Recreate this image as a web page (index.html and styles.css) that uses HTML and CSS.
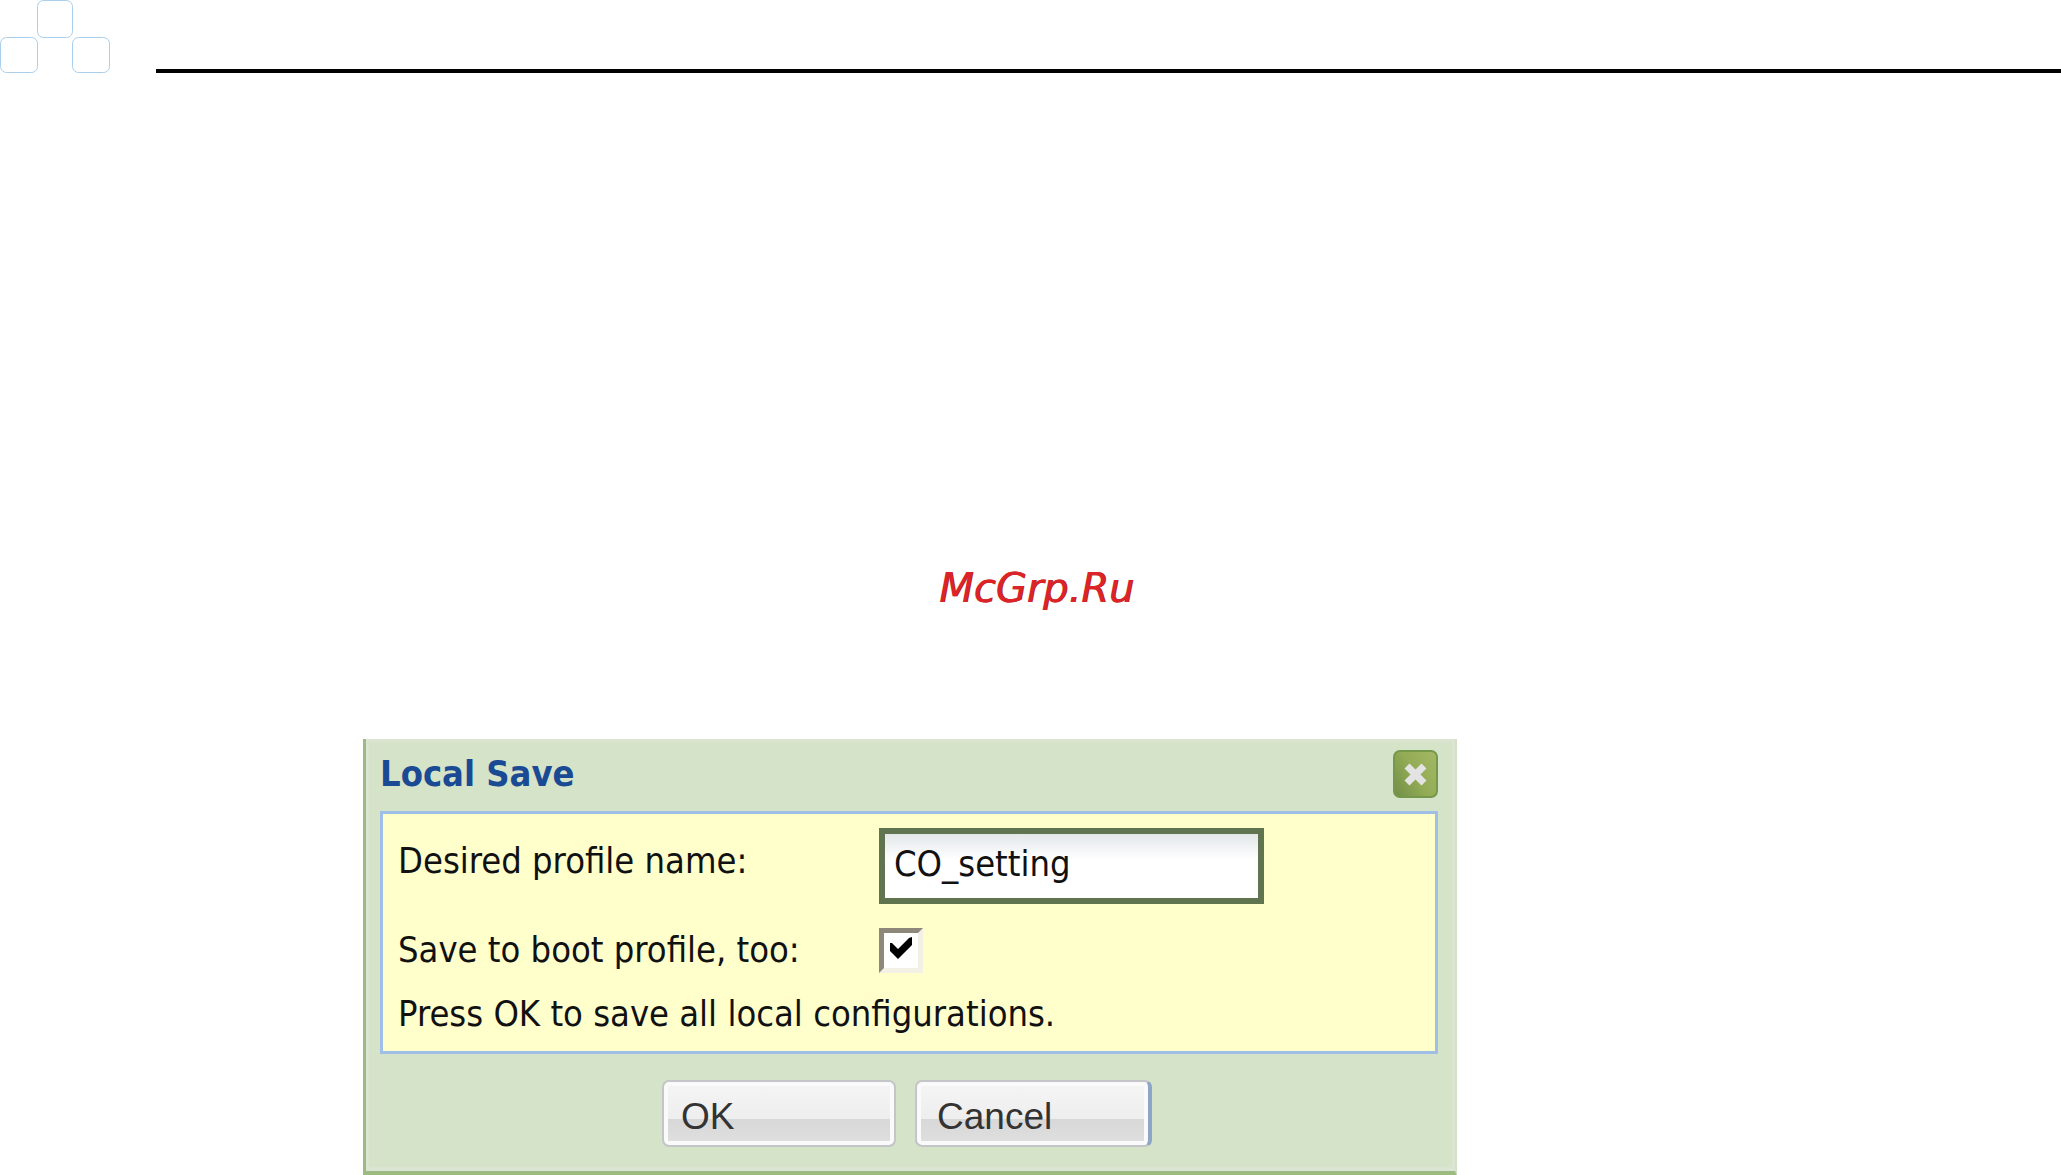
FILE: index.html
```html
<!DOCTYPE html>
<html lang="en">
<head>
    <meta charset="UTF-8">
    <meta name="viewport" content="width=device-width, initial-scale=1.0">
    <title>Local Save</title>

    <link rel="stylesheet" href="styles.css">
</head>
<body>
    <header class="topo">
        <svg class="logo" width="110" height="74" viewBox="0 0 110 74" aria-hidden="true">
            <rect x="37.5" y="0.5" width="35" height="37" rx="6"/>
            <rect x="0.5" y="37.5" width="37" height="35" rx="6"/>
            <rect x="72.5" y="37.5" width="37" height="35" rx="6"/>
        </svg>
        <div class="line"></div>
    </header>

    <p class="watermark">McGrp.Ru</p>

    <main class="page">
        <form class="dialog" onsubmit="return false">
            <div class="dialog-title">
                <h1>Local Save</h1>
                <button type="button" class="close" aria-label="Close">
                    <svg width="25" height="25" viewBox="0 0 25 25" aria-hidden="true">
                        <path d="M4 4L21 21M21 4L4 21"/>
                    </svg>
                </button>
            </div>

            <div class="dialog-body">
                <div class="row row-name">
                    <label for="profile">Desired profile name:</label>
                    <input type="text" id="profile" value="CO_setting">
                </div>
                <div class="row row-boot">
                    <label for="boot">Save to boot profile, too:</label>
                    <span class="check">
                        <input type="checkbox" id="boot" checked>
                        <svg width="22" height="22" viewBox="0 0 22 22" aria-hidden="true">
                            <path d="M0 6L2 6L8 12L19 1L22 0V8L8 22L0 14Z"/>
                        </svg>
                    </span>
                </div>
                <p>Press OK to save all local configurations.</p>
            </div>

            <div class="buttons">
                <button type="submit">OK</button>
                <button type="button" class="cancel">Cancel</button>
            </div>
        </form>
    </main>
</body>
</html>
```

FILE: styles.css
```css
* {
    box-sizing: border-box;
}

body {
    margin: 0;
    background-color: #fff;
    font-family: "DejaVu Sans Condensed", "Noto Sans", sans-serif;
    font-size: 36px;
    color: #111;
}

.topo {
    display: flex;
    align-items: flex-end;
    gap: 46px;
}
.logo {
    fill: none;
    stroke: #a9cfec;
    stroke-width: 1;
}
.line {
    flex-grow: 1;
    height: 4px;
    margin-bottom: 1px;
    background-color: #000;
}

.watermark {
    margin: 490px 0 127px;
    padding-left: 12px;
    font-family: "DejaVu Sans", sans-serif;
    font-size: 40px;
    font-style: italic;
    line-height: 48px;
    text-align: center;
    color: #dc2428;
    text-shadow: 1px 0 0 #a81c20;
}

.page {
    display: grid;
    grid-template-columns: 363fr 1094fr 604fr;
}

.dialog {
    grid-column: 2;
    padding: 8px 17px 24px 14px;
    border-left: 3px solid #9bbb82;
    border-right: 2px solid #d5dfcb;
    border-bottom: 5px solid #9bbb82;
    background-color: #d5e3c8;
    box-shadow: inset 3px 3px 2px #dce5d3, inset -3px -4px 2px #dce5d3;
}

.dialog-title {
    display: flex;
    align-items: center;
    justify-content: space-between;
    height: 64px;
    padding-bottom: 10px;
}
.dialog-title h1 {
    margin: 0;
    font-size: 36px;
    line-height: 48px;
    color: #1b4a94;
}
.close {
    display: flex;
    align-items: center;
    justify-content: center;
    width: 45px;
    height: 48px;
    padding: 0;
    border: 2px solid #76984a;
    border-radius: 7px;
    background: linear-gradient(60deg, #718f48, #94ac55 50%, #a3b765);
}
.close path {
    fill: none;
    stroke: #e3e3e3;
    stroke-width: 7;
}

.dialog-body {
    padding: 14px 16px 7px 15px;
    border: 3px solid #9fbfe6;
    background-color: #ffffcc;
}
.row {
    display: grid;
    grid-template-columns: 481px 1fr;
    align-items: center;
}
.row-name {
    height: 75px;
}
.row-boot {
    height: 45px;
    margin-top: 23px;
}
.row label, .dialog-body p {
    line-height: 48px;
}
.row-name label {
    padding-bottom: 10px;
}
.dialog-body p {
    margin: 19px 0 6px;
}

#profile {
    width: 385px;
    height: 76px;
    padding: 0 9px 5px;
    border: 6px solid #5f744f;
    border-radius: 0;
    background: linear-gradient(#e3e7e9, #fff 40%);
    font: inherit;
    color: #111;
}

.check {
    position: relative;
    width: 44px;
    height: 45px;
}
.check input {
    appearance: none;
    display: block;
    width: 44px;
    height: 45px;
    margin: 0;
    border: 5px solid;
    border-color: #8e887b #f3f1e6 #f3f1e6 #8e887b;
    background-color: #fff;
}
.check svg {
    position: absolute;
    top: 9px;
    left: 11px;
    display: none;
    pointer-events: none;
}
.check input:checked + svg {
    display: block;
}

.buttons {
    display: flex;
    justify-content: center;
    gap: 19px;
    padding-top: 26px;
    padding-right: 4px;
}
.buttons button {
    width: 234px;
    height: 67px;
    padding: 6px 17px 0;
    border: 2px solid #c3c5c8;
    border-radius: 7px;
    background: linear-gradient(#f5f5f5, #eee 58%, #d8d8d8 59%, #dfdfdf);
    box-shadow: inset 0 0 0 4px #fafafa;
    font-family: "Liberation Sans", Arial, sans-serif;
    font-size: 37px;
    text-align: left;
    color: #333;
}
.buttons .cancel {
    width: 237px;
    padding-left: 20px;
    border-right: 4px solid #8fa5c5;
}
```
